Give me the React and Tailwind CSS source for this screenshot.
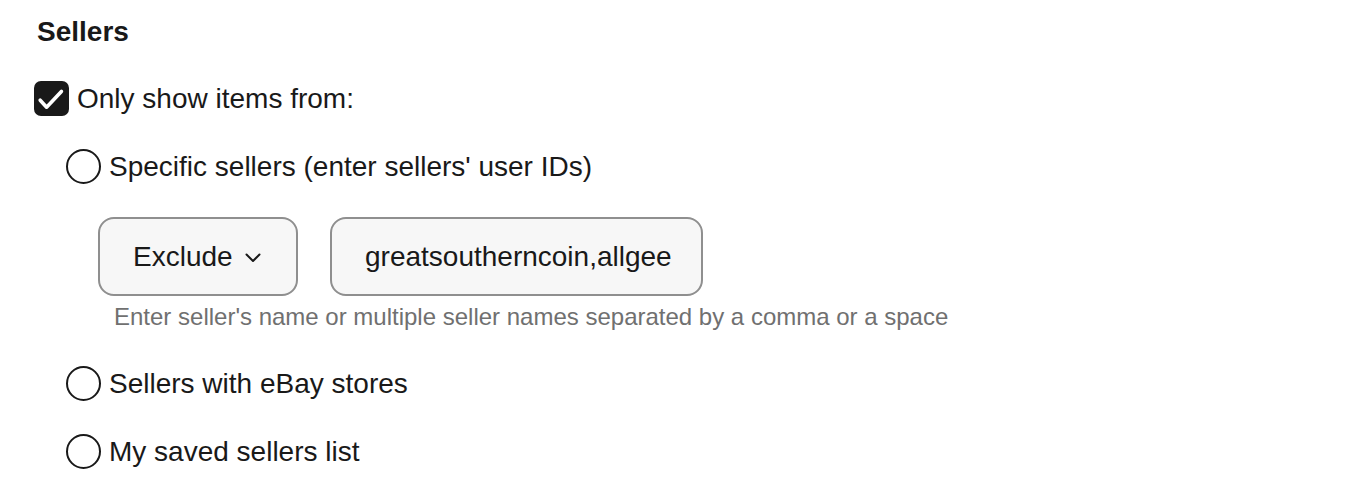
import React, { useState } from 'react';

const Radio = ({ checked, onClick, label }) => (
  <button type="button" onClick={onClick} className="flex items-center gap-[8px] h-[35px] text-left">
    <span className="w-[35px] h-[35px] rounded-full border-[2px] border-[#191919] bg-white flex items-center justify-center shrink-0">
      {checked && <span className="w-[17px] h-[17px] rounded-full bg-[#191919]" />}
    </span>
    <span className="text-[28px] leading-[32px] text-[#191919]">{label}</span>
  </button>
);

const App = () => {
  const [onlyFrom, setOnlyFrom] = useState(true);
  const [choice, setChoice] = useState(null);
  const [sellers, setSellers] = useState('greatsoutherncoin,allgee');

  return (
    <div className="min-h-[494px] bg-white px-[34px] pt-[16px] font-['Liberation_Sans',Arial,sans-serif] text-[#191919]">
      {/* --- HEADING --- */}
      <h3 className="pl-[3px] text-[28px] leading-[32px] font-bold">Sellers</h3>

      {/* --- ONLY SHOW CHECKBOX --- */}
      <button type="button" onClick={() => setOnlyFrom(!onlyFrom)} className="mt-[33px] flex items-center gap-[8px] h-[35px]">
        <span className={`w-[35px] h-[35px] rounded-[7px] flex items-center justify-center shrink-0 ${onlyFrom ? 'bg-[#191919]' : 'border-[2px] border-[#191919] bg-white'}`}>
          {onlyFrom && (
            <svg width="35" height="35" viewBox="0 0 35 35" fill="none">
              <path d="M6.2 19.2 L12.6 26.2 L27.4 10.4" stroke="white" strokeWidth="3.6" strokeLinecap="round" strokeLinejoin="round" />
            </svg>
          )}
        </span>
        <span className="text-[28px] leading-[32px]">Only show items from:</span>
      </button>

      {/* --- OPTIONS --- */}
      <div className="pl-[32px]">
        <div className="mt-[33px]">
          <Radio checked={choice === 'specific'} onClick={() => setChoice('specific')} label="Specific sellers (enter sellers' user IDs)" />
        </div>

        <div className="mt-[33px] pl-[32px] flex gap-[32px]">
          <button type="button" className="w-[200px] h-[79px] rounded-[16px] border-[2px] border-[#8f8f8f] bg-[#f7f7f7] flex items-center pl-[33px] gap-[12px] text-[28px] leading-[32px]">
            <span>Exclude</span>
            <svg width="16" height="10" viewBox="0 0 16 10" fill="none" className="mt-[2px]">
              <path d="M1.5 1.5 L8 8 L14.5 1.5" stroke="#191919" strokeWidth="2" strokeLinecap="round" strokeLinejoin="round" />
            </svg>
          </button>
          <input
            value={sellers}
            onChange={e => setSellers(e.target.value)}
            className="w-[373px] h-[79px] rounded-[16px] border-[2px] border-[#8f8f8f] bg-[#f7f7f7] pl-[33px] pr-[30px] text-[28px] text-[#191919] outline-none"
          />
        </div>
        <p className="mt-[7px] pl-[48px] text-[24px] leading-[28px] text-[#707070]">
          Enter seller's name or multiple seller names separated by a comma or a space
        </p>

        <div className="mt-[35px]">
          <Radio checked={choice === 'stores'} onClick={() => setChoice('stores')} label="Sellers with eBay stores" />
        </div>
        <div className="mt-[33px]">
          <Radio checked={choice === 'saved'} onClick={() => setChoice('saved')} label="My saved sellers list" />
        </div>
      </div>
    </div>
  );
};

export default App;
